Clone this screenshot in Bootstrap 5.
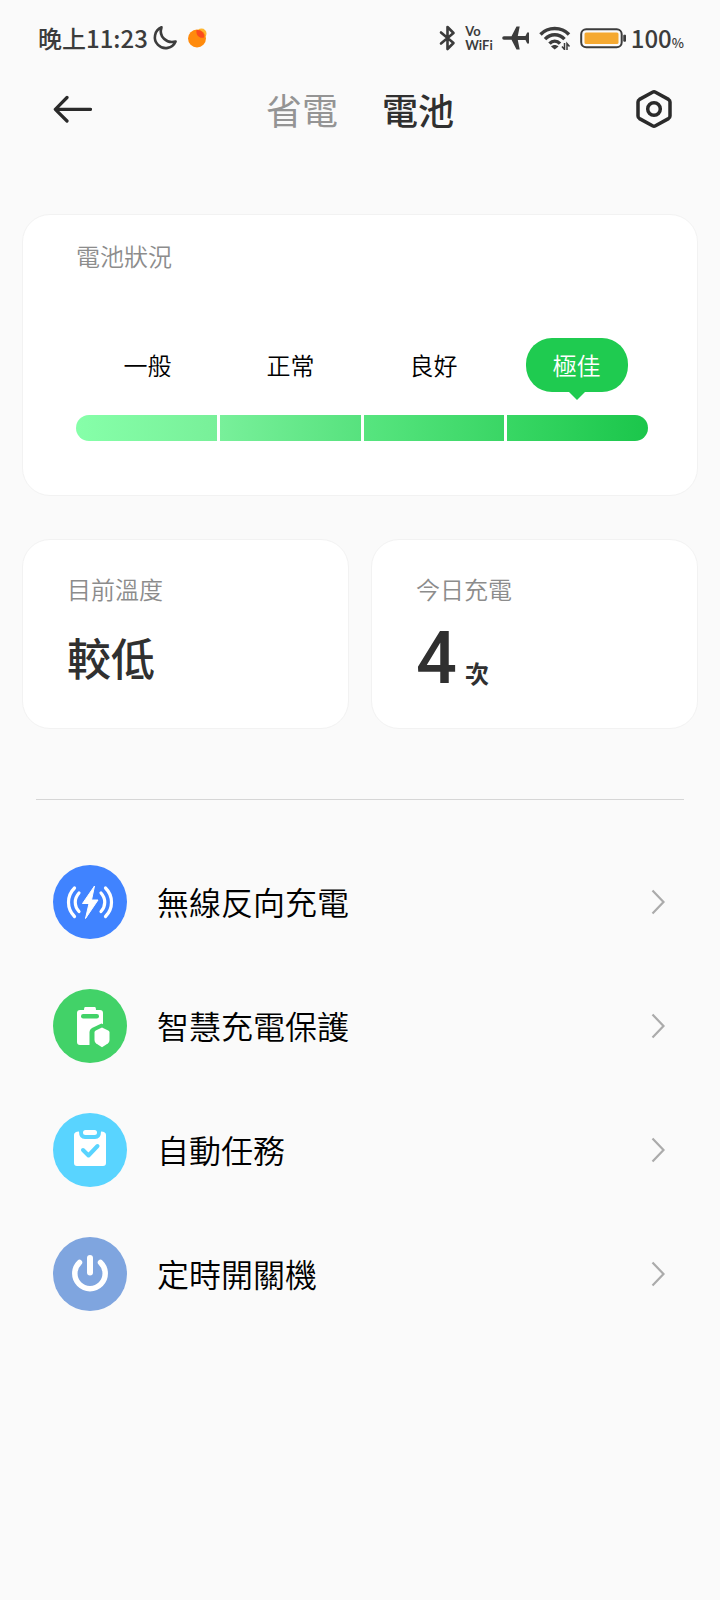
<!DOCTYPE html>
<html lang="zh-Hant">
<head>
<meta charset="utf-8">
<meta name="viewport" content="width=device-width, initial-scale=1">
<title>電池</title>
<link href="https://cdn.jsdelivr.net/npm/bootstrap@5.3.0/dist/css/bootstrap.min.css" rel="stylesheet">
<style>
  body { background: #fafafa; color: #000; font-family: "Noto Sans CJK TC", "Noto Sans", sans-serif; }
  svg { display: block; flex: none; }
  .ink { color: #303030; }
  .muted-label { color: #8c8c8c; font-size: 24px; line-height: 32px; font-weight: 350; }
  .status-bar { height: 76px; padding: 0 36px 0 38px; color: #3c3c3c; font-size: 24px; line-height: 32px; font-weight: 500; }
  .status-icons { gap: 9px; }
  .vowifi { font: 700 13px/14px "Lato", sans-serif; }
  .percent-sign { font-size: 13px; }
  .top-nav { height: 66px; padding: 0 48px; }
  .tab-pair { gap: 44px; }
  .tab-pair a { font-size: 36px; line-height: 48px; color: #949494; font-weight: 400; text-decoration: none; }
  .tab-pair a.active { color: #303030; font-weight: 500; }
  .page-main { padding: 72px 22px 0; }
  .tile { background: #fff; border: 1px solid #f2f2f2; border-radius: 28px; }
  .health { padding: 25px 49px 54px 53px; }
  .levels { height: 55px; margin-top: 66px; font-size: 24px; line-height: 54px; font-weight: 350; }
  .bubble { position: relative; display: inline-block; padding: 0 27px; border-radius: 26px; background: #1fcb50; color: #fff; }
  .bubble::after { content: ""; position: absolute; top: 100%; left: 50%; margin-left: -8px; border: 8px solid transparent; border-top-color: #1fcb50; border-bottom: 0; }
  .level-bar { gap: 3px; height: 26px; margin-top: 22px; }
  .level-bar span { flex: 1; }
  .level-bar span:nth-child(1) { background: linear-gradient(90deg, #86ffa9, #78f099); border-radius: 13px 0 0 13px; }
  .level-bar span:nth-child(2) { background: linear-gradient(90deg, #78f09a, #57e27e); }
  .level-bar span:nth-child(3) { background: linear-gradient(90deg, #57e57f, #3ad665); }
  .level-bar span:nth-child(4) { background: linear-gradient(90deg, #38d764, #1bc64b); border-radius: 0 13px 13px 0; }
  .tiles { gap: 22px; margin-top: 43px; }
  .tiles .tile { flex: 1; height: 190px; padding: 33px 44px; }
  .reading { font-size: 44px; line-height: 64px; font-weight: 500; margin-top: 20px; }
  .count { font: 500 72px/72px Roboto, sans-serif; }
  .count-row { gap: 8px; margin-top: 18px; }
  .unit { font-size: 24px; font-weight: 700; }
  .rule { height: 1px; background: #d6d6d6; margin: 70px 14px 40px; }
  .menu-row { height: 124px; padding: 0 31px; gap: 30px; color: #000; font-size: 32px; line-height: 48px; font-weight: 350; text-decoration: none; }
  .menu-row span { margin-bottom: 2px; }
</style>
</head>
<body>
<div class="status-bar d-flex align-items-center justify-content-between">
  <div class="d-flex align-items-center">
    <span>晚上11:23</span>
    <svg class="ms-1" width="26" height="26" viewBox="0 0 26 26" fill="none" stroke="#3c3c3c" stroke-width="2.6" stroke-linejoin="round"><path d="M9.500 2.300A10.800 10.800 0 1 0 23.600 16.500C14.500 19 6.500 11.500 9.500 2.300Z"/></svg>
    <svg class="ms-2" width="22" height="22" viewBox="0 0 22 22"><circle cx="15.500" cy="6.500" r="5" fill="#ffb52e"/><circle cx="11" cy="11.500" r="9" fill="#ff8a0c"/><path d="M10.500 3C15 2.500 19 6 18 10.500C14 12 9.500 8.500 10.500 3Z" fill="#fb4c1c"/></svg>
  </div>
  <div class="d-flex align-items-center gap-1">
    <div class="status-icons d-flex align-items-center">
      <svg width="17" height="26" viewBox="0 0 17 26" fill="none" stroke="#3c3c3c" stroke-width="2.600" stroke-linejoin="round" stroke-linecap="round"><path d="M2 7.500L14.500 18L8.500 24V2L14.500 8L2 18.500"/></svg>
      <div class="vowifi">Vo<br>WiFi</div>
      <svg width="28" height="26" viewBox="0 0 28 26" fill="#3c3c3c"><path d="M2 11.200H9.500L14.500 1.500H17.700L15.800 11H23.500L25.200 7.500H27V18.500H25.200L23.500 15H15.800L17.700 24.500H14.500L9.500 14.800H2A1.800 1.800 0 0 1 2 11.200Z"/></svg>
      <svg width="32" height="24" viewBox="0 0 32 24" fill="none" stroke="#3c3c3c" stroke-width="3.400"><path d="M1.500 8.500C9 .500 22.500 .500 30 8.500M6 13.200C11.500 7.300 20 7.300 25.500 13.200M10.500 17.600C13.500 14.300 18 14.300 21 17.600"/><path d="M12 20.500C14 18.500 17.500 18.500 19.500 20.500L15.700 23.500Z" fill="#3c3c3c" stroke="none"/><path d="M25.500 17V23.500L23 20.500M28 24V17.500L30.500 20.500" stroke-width="1.500"/></svg>
      <svg width="47" height="21" viewBox="0 0 47 21"><rect x="1.200" y="1.200" width="40.500" height="18" rx="5" fill="none" stroke="#3c3c3c" stroke-width="2"/><rect x="4.500" y="4.500" width="34" height="11.500" rx="1.500" fill="#f5a931"/><path d="M43.800 7.200H45.500V13.200H43.800Z" fill="#3c3c3c" stroke="#3c3c3c"/></svg>
    </div>
    <div class="lh-1 text-nowrap">100<span class="percent-sign">%</span></div>
  </div>
</div>

<header class="top-nav d-flex align-items-center justify-content-between">
  <button type="button" class="btn p-0 border-0" aria-label="返回">
    <svg width="44" height="44" viewBox="0 0 44 44" fill="none" stroke="#2a2a2a" stroke-width="3.200" stroke-linecap="round" stroke-linejoin="round"><path d="M42.500 22.300H7.500M19 10.500L7.300 22.300L19 34"/></svg>
  </button>
  <nav class="tab-pair d-flex">
    <a href="#saver">省電</a>
    <a href="#battery" class="active" aria-current="page">電池</a>
  </nav>
  <button type="button" class="btn p-0 border-0" aria-label="設定">
    <svg width="44" height="44" viewBox="0 0 44 44" fill="none" stroke="#2a2a2a" stroke-width="3.500" stroke-linejoin="round"><path d="M27.500 5.200L40.500 12.400Q42 13.300 42 15V29Q42 30.700 40.500 31.600L27.500 38.800Q26 39.600 24.500 38.800L11.500 31.600Q10 30.700 10 29V15Q10 13.300 11.500 12.400L24.500 5.200Q26 4.400 27.500 5.200Z"/><circle cx="26" cy="22" r="6.300"/></svg>
  </button>
</header>

<main class="page-main">
  <section class="tile health">
    <div class="muted-label">電池狀況</div>
    <div class="levels row g-0 text-center">
      <div class="col">一般</div>
      <div class="col">正常</div>
      <div class="col">良好</div>
      <div class="col"><span class="bubble">極佳</span></div>
    </div>
    <div class="level-bar d-flex"><span></span><span></span><span></span><span></span></div>
  </section>

  <div class="tiles d-flex">
    <section class="tile">
      <div class="muted-label">目前溫度</div>
      <div class="reading ink">較低</div>
    </section>
    <section class="tile">
      <div class="muted-label">今日充電</div>
      <div class="count-row ink d-flex align-items-baseline"><span class="count">4</span><span class="unit">次</span></div>
    </section>
  </div>

  <div class="rule"></div>

  <nav>
    <a href="#reverse" class="menu-row d-flex align-items-center">
      <svg width="74" height="74" viewBox="0 0 74 74"><circle cx="37" cy="37" r="37" fill="#4083ff"/><path d="M41.500 21L29.500 38.500H36L32.500 53.500L45 35H38.500Z" fill="#fff" stroke="#fff" stroke-linejoin="round"/><g fill="none" stroke="#fff" stroke-width="3.200" stroke-linecap="round"><path d="M21.500 23C13.500 31 13.500 43.500 21.500 51.500M26 28C21 33.500 21 41 26 46.500M52.500 23C60.500 31 60.500 43.500 52.500 51.500M48 28C53 33.500 53 41 48 46.500"/></g></svg>
      <span class="flex-grow-1">無線反向充電</span>
      <svg width="16" height="26" viewBox="0 0 16 26" fill="none" stroke="#ababab" stroke-width="2.200"><path d="M1.500 1.500L12.500 13L1.500 24.500"/></svg>
    </a>
    <a href="#protect" class="menu-row d-flex align-items-center">
      <svg width="74" height="74" viewBox="0 0 74 74"><circle cx="37" cy="37" r="37" fill="#42d268"/><path d="M32 18H42Q43 18 43 21H47Q50 21 50 24V53Q50 56 47 56H27Q24 56 24 53V24Q24 21 27 21H31Q31 18 32 18Z" fill="#fff"/><rect x="28" y="25" width="18" height="4.500" rx="2.200" fill="#42d268"/><path d="M36.500 57V43Q36.500 40.500 39 39L48.500 34.500L58 39V57Z" fill="#42d268"/><path d="M49 38.500L55.200 41.500Q56.500 42.200 56.500 43.500V51Q56.500 53.200 54.800 54.400L49 58.300L43.200 54.400Q41.500 53.200 41.500 51V43.500Q41.500 42.200 42.800 41.500Z" fill="#fff"/></svg>
      <span class="flex-grow-1">智慧充電保護</span>
      <svg width="16" height="26" viewBox="0 0 16 26" fill="none" stroke="#ababab" stroke-width="2.200"><path d="M1.500 1.500L12.500 13L1.500 24.500"/></svg>
    </a>
    <a href="#tasks" class="menu-row d-flex align-items-center">
      <svg width="74" height="74" viewBox="0 0 74 74"><circle cx="37" cy="37" r="37" fill="#59d4ff"/><path d="M26 18.500Q26 26 32 26H42Q48 26 48 18.500Q53 18.500 53 22V50Q53 53 50 53H24Q21 53 21 50V22Q21 18.500 26 18.500Z" fill="#fff"/><rect x="30" y="17" width="14" height="5" rx="2.500" fill="#fff"/><path d="M30 37L35.500 42.500L44.500 33" fill="none" stroke="#59d4ff" stroke-width="4" stroke-linecap="round" stroke-linejoin="round"/></svg>
      <span class="flex-grow-1">自動任務</span>
      <svg width="16" height="26" viewBox="0 0 16 26" fill="none" stroke="#ababab" stroke-width="2.200"><path d="M1.500 1.500L12.500 13L1.500 24.500"/></svg>
    </a>
    <a href="#schedule" class="menu-row d-flex align-items-center">
      <svg width="74" height="74" viewBox="0 0 74 74"><circle cx="37" cy="37" r="37" fill="#7fa5df"/><g fill="none" stroke="#fff" stroke-width="6" stroke-linecap="round"><path d="M37 21V35.500"/><path d="M26.500 25.500A15.200 15.200 0 1 0 47.500 25.500" stroke-width="5.500"/></g></svg>
      <span class="flex-grow-1">定時開關機</span>
      <svg width="16" height="26" viewBox="0 0 16 26" fill="none" stroke="#ababab" stroke-width="2.200"><path d="M1.500 1.500L12.500 13L1.500 24.500"/></svg>
    </a>
  </nav>
</main>
<script src="https://cdn.jsdelivr.net/npm/bootstrap@5.3.0/dist/js/bootstrap.bundle.min.js"></script>
</body>
</html>
